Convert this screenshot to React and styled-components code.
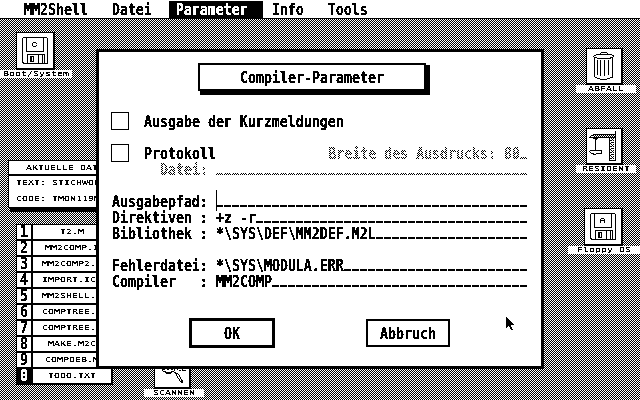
import React from "react";
import styled, { createGlobalStyle, css } from "styled-components";

const GlobalStyle = createGlobalStyle`
  * { box-sizing: border-box; }
  body { margin: 0; background: #fff; }
`;

const dither = css`
  conic-gradient(#000 25%, #fff 0 50%, #000 0 75%, #fff 0) 0 0 / 2px 2px
`;
const ditherMask = css`
  conic-gradient(#000 25%, transparent 0 50%, #000 0 75%, transparent 0) 0 0 / 2px 2px
`;

const Screen = styled.div`
  position: relative;
  width: 640px;
  height: 400px;
  overflow: hidden;
  color: #000;
  background: ${dither};
`;

const FilterDefs = styled.svg`
  position: absolute;
  width: 0;
  height: 0;
`;

/* 8x16 system font */
const Big = styled.span`
  display: block;
  flex: none;
  height: 16px;
  font: bold 13.288px/16px "DejaVu Sans Mono", monospace;
  white-space: pre;
  transform: translateY(2px) scaleY(1.14);
  transform-origin: 0 12px;
  filter: url(#bilevel);
`;

/* 6x6 system font */
const Small = styled.span`
  display: block;
  flex: none;
  height: 8px;
  font: 9.967px/8px "DejaVu Sans Mono", monospace;
  white-space: pre;
  transform: translateY(-0.8px) scaleY(0.7);
  transform-origin: 0 7px;
  filter: url(#bilevel-thin);
`;

const MenuBar = styled.nav`
  position: relative;
  display: flex;
  height: 19px;
  padding: 1px 0 0 16px;
  background: #fff;
  border-bottom: 1px solid #000;
`;

const MenuTitle = styled.div`
  height: 17px;
  margin: 0 1px;
  padding: 0 15px 0 7px;
  color: ${(p) => (p.$active ? "#fff" : "#000")};
  background: ${(p) => (p.$active ? "#000" : "none")};
`;

const DeskIcon = styled.figure`
  position: absolute;
  left: ${(p) => p.$x}px;
  top: ${(p) => p.$y}px;
  width: ${(p) => p.$w}px;
  margin: 0;
  display: flex;
  flex-direction: column;
`;

const IconBox = styled.div`
  width: ${(p) => p.$w}px;
  height: ${(p) => p.$h}px;
  margin-left: ${(p) => p.$indent}px;
  background: #fff;
  border: solid #000;
  border-width: 1px 2px 2px 1px;
  svg { display: block; }
`;

const IconLabel = styled.figcaption`
  display: flex;
  justify-content: center;
  height: 8px;
  background: #fff;
`;

const InfoPanel = styled.section`
  position: absolute;
  left: 8px;
  top: 160px;
  width: 104px;
  height: 48px;
  display: flex;
  flex-direction: column;
  background: #fff;
  border: 1px solid #000;
  box-shadow: 3px 3px 0 1px #000;
`;

const InfoHeader = styled.header`
  height: 16px;
  padding: 3px 0 0 17px;
  border-bottom: 2px solid #000;
`;

const InfoLine = styled.div`
  height: 16px;
  padding: 3px 0 0 7px;
`;

const FileList = styled.ol`
  position: absolute;
  left: 16px;
  top: 224px;
  width: 97px;
  margin: 0;
  padding: 1px 2px 0 1px;
  list-style: none;
  background: #000;
`;

const FileRow = styled.li`
  display: grid;
  grid-template-columns: 14px 78px;
  column-gap: 2px;
  height: 16px;
  padding-bottom: 2px;
`;

const FileKey = styled.div`
  display: flex;
  justify-content: center;
  height: 14px;
  color: ${(p) => (p.$selected ? "#fff" : "#000")};
  background: ${(p) => (p.$selected ? "#000" : "#fff")};
  span { margin-top: -2px; }
`;

const FileName = styled.div`
  display: flex;
  justify-content: center;
  height: 14px;
  padding-top: 3px;
  background: #fff;
`;

const Dialog = styled.main`
  position: absolute;
  left: 96px;
  top: 49px;
  width: 448px;
  height: 320px;
  display: flex;
  flex-direction: column;
  padding: 11px 13px 0 13px;
  background: #fff;
  border: 3px solid #000;
`;

const DialogTitle = styled.h1`
  display: flex;
  justify-content: center;
  width: 228px;
  height: 28px;
  margin: 0 0 21px 86px;
  padding-top: 4px;
  background: #fff;
  border: 2px solid #000;
  box-shadow: 3px 3px 0 1px #000;
`;

const CheckRow = styled.div`
  display: flex;
  align-items: center;
  height: 18px;
  margin: 0 0 14px -1px;
`;

const CheckBox = styled.button`
  width: 18px;
  height: 18px;
  margin: 0 15px 0 0;
  padding: 0;
  background: #fff;
  border: 1px solid #000;
`;

const Disabled = styled.div`
  display: flex;
  height: 16px;
  margin-left: auto;
  mask: ${ditherMask};
`;

const DisabledRow = styled(Disabled)`
  margin: -15px 0 0 48px;
`;

const Field = styled.div`
  display: flex;
  width: ${(p) => p.$chars * 8}px;
  height: 16px;
`;

const Blank = styled.span`
  flex: 1;
  height: 2px;
  margin-top: 12px;
  background: repeating-linear-gradient(90deg, #000 0 7px, transparent 7px 8px);
`;

const FormRow = styled.div`
  display: grid;
  grid-template-columns: 104px 312px;
  height: 16px;
  margin-top: ${(p) => p.$gap || 0}px;
`;

const Caret = styled.i`
  width: 1px;
  height: 21px;
  margin: -3px -1px 0 0;
  background: #000;
`;

const Buttons = styled.div`
  display: flex;
  align-items: center;
  gap: 91px;
  margin: 29px 0 0 77px;
`;

const Button = styled.button`
  display: flex;
  align-items: flex-start;
  justify-content: center;
  width: ${(p) => (p.$default ? 86 : 84)}px;
  height: ${(p) => (p.$default ? 30 : 28)}px;
  padding: 4px 0 0;
  color: #000;
  background: #fff;
  border: ${(p) => (p.$default ? 3 : 2)}px solid #000;
`;

const Pointer = styled.svg`
  position: absolute;
  left: 506px;
  top: 317px;
`;

const Line = styled.path`
  fill: none;
  stroke: #000;
  stroke-width: 1;
  shape-rendering: crispEdges;
`;

const Solid = styled.path`
  fill: #000;
  shape-rendering: crispEdges;
`;

function Floppy({ letter }) {
  return (
    <svg width="36" height="35" viewBox="1 1 36 35">
      <Line d="M7 5.5H31M31.5 6V31.5M6.5 6V30M6 30.5h2M7 31.5h2M8 31.5H31" />
      <Line d="M10.5 5V19.5H27.5V5" />
      <Line d="M11.5 32V22.5H28.5V32M22.5 23V32M26.5 23V32" />
      <Line d="M14.5 24V29.5H17.5V24.5H14M15.5 24V30" />
      {letter === "C" ? (
        <Line d="M17 10.5h3M16.5 11v3M17 14.5h3M20.5 11v1M20.5 13v1" />
      ) : (
        <Line d="M17 10.5h3M16.5 11v4M20.5 11v4M17 12.5h3" />
      )}
    </svg>
  );
}

function Trash() {
  return (
    <svg width="34" height="34" viewBox="1 1 34 34">
      <Line d="M15 4.5h6M14.5 5v2M21.5 5v2M10 6.5h16M8 7.5h2M26 7.5h2M7.5 8v1M27.5 8v1M8 9.5h3M24 9.5h3M11 10.5h14" />
      <Line d="M8.5 10v19M26.5 10v19M9 29.5h2M24 29.5h3M11 30.5h3M21 30.5h3M14 31.5h7" />
      <Line d="M11.5 12v15M14.5 12v16M18.5 12v16M22.5 12v15" />
    </svg>
  );
}

function Crane() {
  return (
    <svg width="34" height="34" viewBox="1 1 34 34">
      <Line d="M29.5 3v30M7 6.5h23M5 7.5h2M3 9.5h26M4 8.5h1M23.5 10v23M23 32.5h7" />
      <Line strokeDasharray="1 1" d="M7 7.5h22M8 8.5h21M25.5 10v22M27.5 10v22" />
      <Line strokeDasharray="1 2" d="M26.5 11v21M24.5 12v20" />
      <Line d="M7 10.5h5M8.5 10v1M9 11.5h2M9.5 12v10M4 22.5h4M3.5 23v1M4 24.5h1M5 25.5h3M7.5 25v2M8 22.5h2M10 22.5h5M15.5 22v3M10 25.5h6M8 26.5h2" />
    </svg>
  );
}

function Magnifier() {
  return (
    <svg width="34" height="34" viewBox="1 1 34 34">
      <Line d="M10 8.5h9M7.5 11v6M21.5 11v6M8.5 17v2M20.5 17v2M9 19.5h3M17 19.5h3M11 20.5h7M12 21.5h5" />
      <Solid d="M9 16h2v2h-2zM13 15h2v3h-2zM17 15h2v3h-2z" />
      <Line d="M23.5 16v2M25 18.5h2M28.5 16v3M28 18.5h4M20 20.5h2M21 21.5h3M22.5 22v2M24 22.5h1M23.5 24v2M25.5 23v2M24.5 26v1M26.5 25v2M25.5 27v2M27.5 27v2M28.5 28v3M26 29.5h2M27 30.5h2" />
    </svg>
  );
}

const files = [
  ["1", "T2.M"],
  ["2", "MM2COMP.I"],
  ["3", "MM2COMP2. "],
  ["4", "IMPORT.IC "],
  ["5", "MM2SHELL. "],
  ["6", "COMPTREE. "],
  ["7", "COMPTREE. "],
  ["8", "MAKE.M2C"],
  ["9", "COMPDEB.M"],
  ["0", "TODO.TXT"],
];

const fields = [
  { label: "Ausgabepfad:", value: "", gap: 16, caret: true },
  { label: "Direktiven :", value: "+z -r" },
  { label: "Bibliothek :", value: "*\\SYS\\DEF\\MM2DEF.M2L" },
  { label: "Fehlerdatei:", value: "*\\SYS\\MODULA.ERR", gap: 16 },
  { label: "Compiler   :", value: "MM2COMP" },
];

function Desk({ x, y, w, box, label, children }) {
  return (
    <DeskIcon $x={x} $y={y} $w={w}>
      <IconBox $w={box[0]} $h={box[1]} $indent={box[2]}>{children}</IconBox>
      <IconLabel><Small>{label}</Small></IconLabel>
    </DeskIcon>
  );
}

export default function App() {
  return (
    <Screen>
      <GlobalStyle />
      <FilterDefs>
        <filter id="bilevel" x="-5%" y="-20%" width="110%" height="140%">
          <feComponentTransfer><feFuncA type="discrete" tableValues="0 1 1" /></feComponentTransfer>
        </filter>
        <filter id="bilevel-thin" x="-5%" y="-40%" width="110%" height="180%">
          <feComponentTransfer><feFuncA type="discrete" tableValues="0 0 1 1 1" /></feComponentTransfer>
        </filter>
      </FilterDefs>

      <MenuBar>
        {["MM2Shell", "Datei", "Parameter", "Info", "Tools"].map((t) => (
          <MenuTitle key={t} $active={t === "Parameter"}><Big>{t}</Big></MenuTitle>
        ))}
      </MenuBar>

      <Desk x={0} y={32} w={72} box={[39, 38, 16]} label="Boot/System"><Floppy letter="C" /></Desk>
      <Desk x={576} y={48} w={60} box={[37, 37, 10]} label="ABFALL"><Trash /></Desk>
      <Desk x={576} y={128} w={60} box={[37, 37, 10]} label="RESIDENT"><Crane /></Desk>
      <Desk x={568} y={208} w={72} box={[39, 38, 16]} label="Floppy DS"><Floppy letter="A" /></Desk>
      <Desk x={144} y={352} w={60} box={[37, 37, 10]} label="SCANNEN"><Magnifier /></Desk>

      <InfoPanel>
        <InfoHeader><Small>AKTUELLE DAT</Small></InfoHeader>
        <InfoLine><Small>TEXT: STICHWOR</Small></InfoLine>
        <InfoLine><Small>CODE: TMON119M</Small></InfoLine>
      </InfoPanel>

      <FileList>
        {files.map(([key, name]) => (
          <FileRow key={key}>
            <FileKey $selected={key === "0"}><Big>{key}</Big></FileKey>
            <FileName><Small>{name}</Small></FileName>
          </FileRow>
        ))}
      </FileList>

      <Dialog>
        <DialogTitle><Big>Compiler-Parameter</Big></DialogTitle>
        <CheckRow>
          <CheckBox aria-label="Ausgabe der Kurzmeldungen" />
          <Big>Ausgabe der Kurzmeldungen</Big>
        </CheckRow>
        <CheckRow>
          <CheckBox aria-label="Protokoll" />
          <Big>Protokoll</Big>
          <Disabled>
            <Big>Breite des Ausdrucks: </Big>
            <Field $chars={3}><Big>80</Big><Blank /></Field>
          </Disabled>
        </CheckRow>
        <DisabledRow>
          <Big>Datei: </Big>
          <Field $chars={39}><Blank /></Field>
        </DisabledRow>
        {fields.map((f) => (
          <FormRow key={f.label} $gap={f.gap}>
            <Big>{f.label}</Big>
            <Field $chars={39}>
              {f.caret && <Caret />}
              {f.value && <Big>{f.value}</Big>}
              <Blank />
            </Field>
          </FormRow>
        ))}
        <Buttons>
          <Button $default><Big>OK</Big></Button>
          <Button><Big>Abbruch</Big></Button>
        </Buttons>
      </Dialog>

      <Pointer width="9" height="14" viewBox="0 0 9 14">
        <Solid d="M0 0h1v1h1v1h1v1h1v1h1v1h1v1h1v1h1v1h-3v2h1v2h1v1h-2v-1h-1v-2h-1v-1h-1v1h-1v1h-1z" />
      </Pointer>
    </Screen>
  );
}
